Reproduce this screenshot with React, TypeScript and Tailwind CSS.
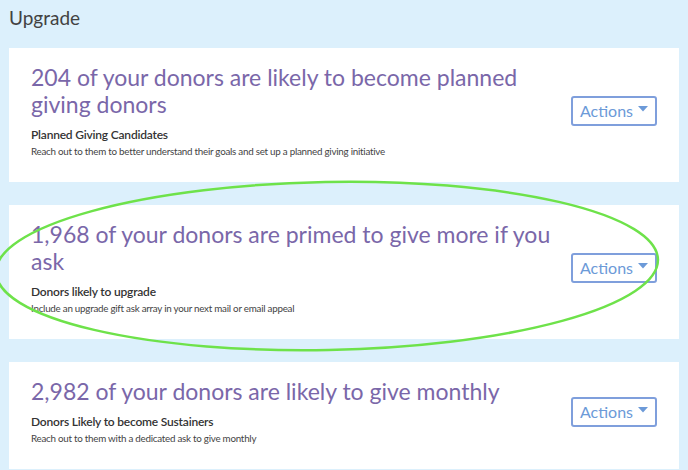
const insights = [
  {
    title: '204 of your donors are likely to become planned giving donors',
    label: 'Planned Giving Candidates',
    text: 'Reach out to them to better understand their goals and set up a planned giving initiative',
  },
  {
    title: '1,968 of your donors are primed to give more if you ask',
    label: 'Donors likely to upgrade',
    text: 'Include an upgrade gift ask array in your next mail or email appeal',
  },
  {
    title: '2,982 of your donors are likely to give monthly',
    label: 'Donors Likely to become Sustainers',
    text: 'Reach out to them with a dedicated ask to give monthly',
  },
];

function ActionsButton() {
  return (
    <button className="flex h-[30px] w-[86px] shrink-0 items-center justify-center gap-[5px] rounded-[3px] border-2 border-[#7f9fdc] bg-white text-[16px] text-[#6c9ad8]">
      <span>Actions</span>
      <svg width="10" height="6" viewBox="0 0 10 6" className="mb-[4px]">
        <path d="M0 0h10L5 5.5z" fill="#6c9ad8" />
      </svg>
    </button>
  );
}

export default function App() {
  return (
    <div
      className="relative h-[470px] w-[688px] overflow-hidden bg-[#dcf0fc] px-[9px]"
      style={{ fontFamily: 'Lato, "Open Sans", sans-serif' }}
    >
      <h1 className="pt-[5px] text-[19px] leading-[26px] text-[#424242]">Upgrade</h1>
      <div className="mt-[17px] flex w-[670px] flex-col gap-[23px]">
        {insights.map((item) => (
          <div key={item.label} className="flex items-center bg-white px-[22px] pb-[24px] pt-[16px]">
            <div className="w-[530px]">
              <h2 className="text-[23px] leading-[27px] text-[#7a67a9]">{item.title}</h2>
              <p className="mt-[9px] text-[12px] font-semibold leading-[16px] tracking-[-0.2px] text-[#333]">
                {item.label}
              </p>
              <p className="mt-[1px] text-[9.8px] leading-[14px] tracking-[-0.25px] text-[#444]">{item.text}</p>
            </div>
            <div className="ml-auto">
              <ActionsButton />
            </div>
          </div>
        ))}
      </div>
      <svg className="pointer-events-none absolute left-0 top-0" width="688" height="470">
        <ellipse
          cx="327"
          cy="266"
          rx="331"
          ry="84"
          transform="rotate(-1.1 327 266)"
          fill="none"
          stroke="#6ee24a"
          strokeWidth="2.5"
        />
      </svg>
    </div>
  );
}
